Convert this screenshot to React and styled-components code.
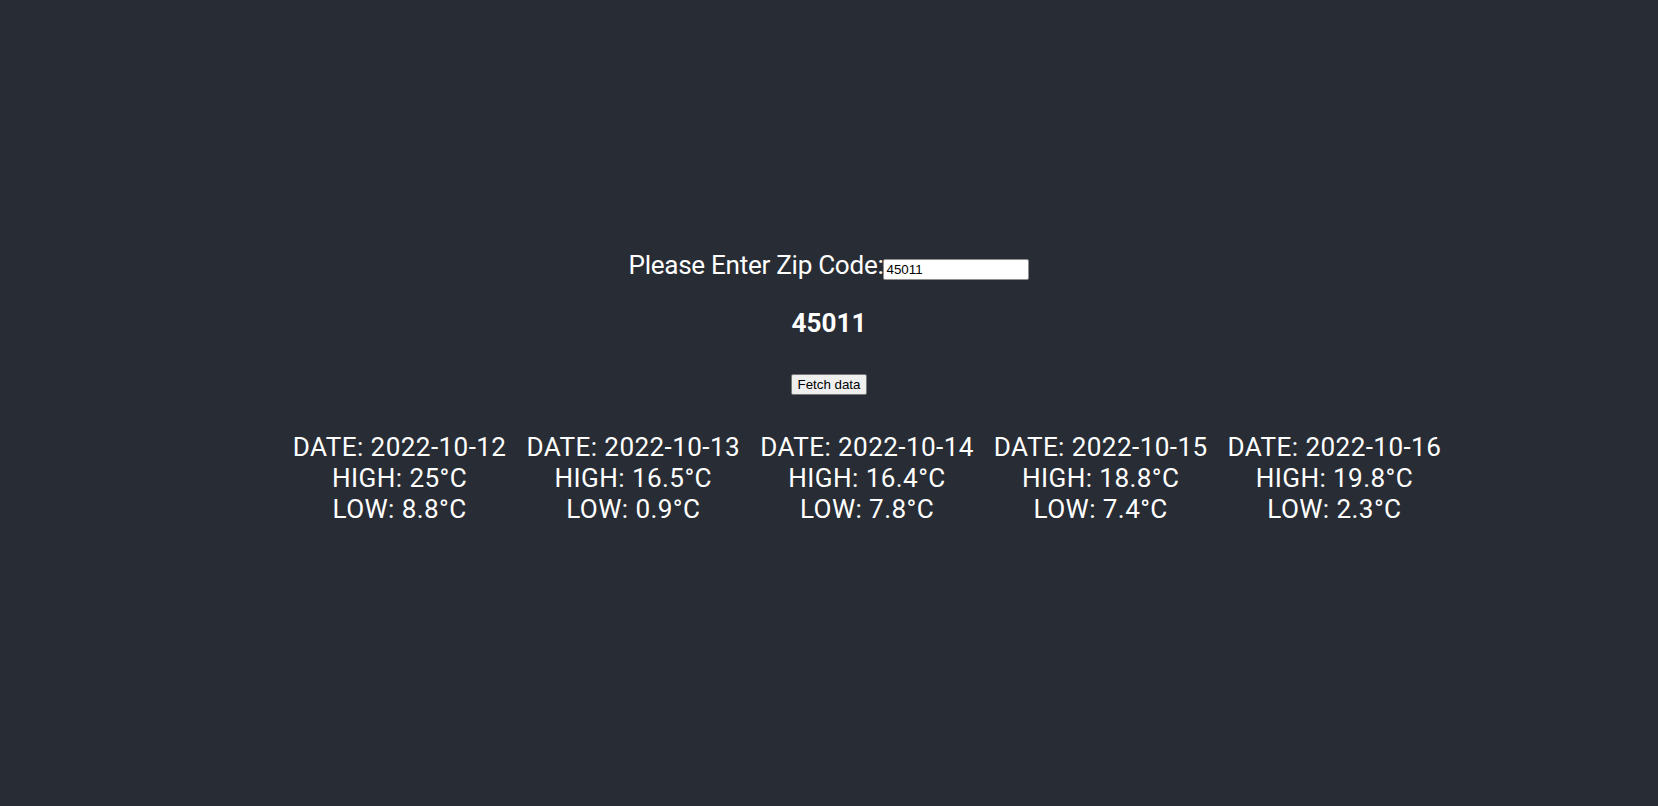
import styled, { createGlobalStyle } from "styled-components";

const GlobalStyle = createGlobalStyle`
  body {
    margin: 0;
    background-color: #282c34;
    font-family: Roboto, "Noto Sans", sans-serif;
  }
`;

const forecast = [
  { date: "2022-10-12", high: 25, low: 8.8 },
  { date: "2022-10-13", high: 16.5, low: 0.9 },
  { date: "2022-10-14", high: 16.4, low: 7.8 },
  { date: "2022-10-15", high: 18.8, low: 7.4 },
  { date: "2022-10-16", high: 19.8, low: 2.3 },
];

const SHeader = styled.header`
  min-height: 100vh;
  display: flex;
  flex-direction: column;
  align-items: center;
  justify-content: center;
  font-size: 26.12px;
  color: #fff;
  text-align: center;
`;

const SZipForm = styled.label`
  display: block;
  line-height: 31px;
  letter-spacing: -0.3px;
  input {
    width: 146px;
    height: 21px;
    box-sizing: border-box;
    padding: 1px 2px;
    border: 1px solid #8f8f8f;
    border-radius: 2px;
    background: #fff;
    color: #000;
    font-family: "Liberation Sans", Arial, sans-serif;
    font-size: 13.33px;
    letter-spacing: 0;
  }
`;

const SZip = styled.h4`
  margin: 23.5px 0 33px;
  font-size: 26.12px;
  font-weight: 700;
  line-height: 36px;
`;

const SButton = styled.button`
  height: 21px;
  padding: 1px 6px;
  border: 1px solid #767676;
  border-radius: 2px;
  background-color: #efefef;
  color: #000;
  font-family: "Liberation Sans", Arial, sans-serif;
  font-size: 13.33px;
`;

const SForecastList = styled.ul`
  display: flex;
  gap: 20px;
  list-style: none;
  margin: 37px 0 31px;
  padding: 0 0 0 76px;
  li {
    line-height: 31px;
    letter-spacing: 0.4px;
  }
`;

export default function App() {
  return (
    <>
      <GlobalStyle />
      <SHeader>
        <SZipForm>
          Please Enter Zip Code:
          <input type="text" defaultValue="45011" />
        </SZipForm>
        <SZip>45011</SZip>
        <SButton>Fetch data</SButton>
        <SForecastList>
          {forecast.map((day) => (
            <li key={day.date}>
              <div>DATE: {day.date}</div>
              <div>HIGH: {day.high}°C</div>
              <div>LOW: {day.low}°C</div>
            </li>
          ))}
        </SForecastList>
      </SHeader>
    </>
  );
}
